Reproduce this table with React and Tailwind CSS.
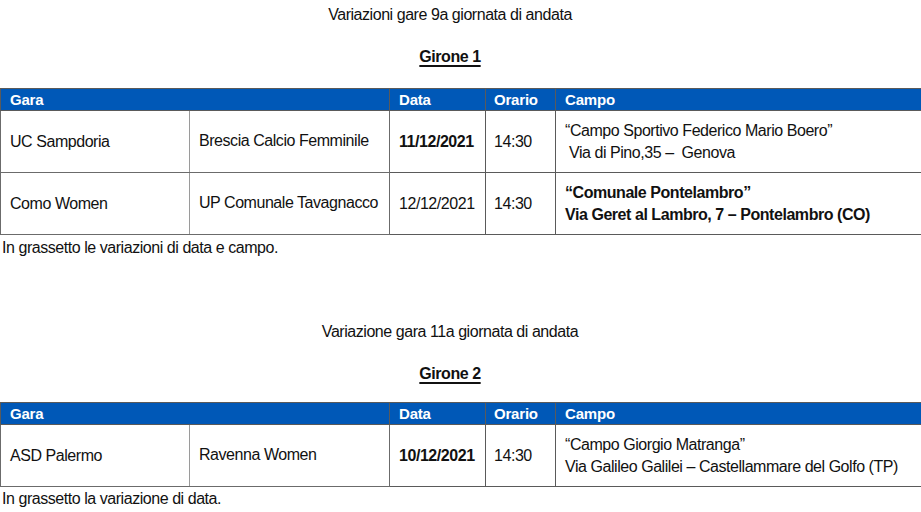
import React from 'react';

const cols = ['w-[189px]', 'w-[200px]', 'w-[96px]', 'w-[70px]', ''];

const HeaderRow = () => (
  <tr className="h-[22px] bg-[#0058b7] text-white font-bold text-[15px] tracking-[-0.2px]">
    <td colSpan={2} className="border border-[#5a5a5a] pl-[9px] leading-[20px]">Gara</td>
    <td className="border border-[#5a5a5a] pl-[9px] leading-[20px]">Data</td>
    <td className="border border-[#5a5a5a] pl-[8px] leading-[20px]">Orario</td>
    <td className="border-y border-l border-[#5a5a5a] pl-[9px] leading-[20px]">Campo</td>
  </tr>
);

const MatchRow = ({ home, away, date, dateBold, time, campo, campoBold }) => (
  <tr className="h-[62px] text-[16px]">
    <td className="border border-[#6b6b6b] border-r-[#9a9a9a] pl-[9px]">{home}</td>
    <td className="border border-[#6b6b6b] border-l-[#9a9a9a] pl-[9px] pb-[2px]">{away}</td>
    <td className={`border border-[#5a5a5a] pl-[9px] ${dateBold ? 'font-bold' : ''}`}>{date}</td>
    <td className="border border-[#5a5a5a] pl-[8px]">{time}</td>
    <td className={`border-y border-l border-[#5a5a5a] pl-[9px] leading-[22px] whitespace-pre ${campoBold ? 'font-bold' : ''}`}>
      {campo.map((line, i) => (
        <div key={i}>{line}</div>
      ))}
    </td>
  </tr>
);

const MatchTable = ({ rows }) => (
  <table className="w-[922px] border-collapse table-fixed">
    <colgroup>
      {cols.map((c, i) => (
        <col key={i} className={c} />
      ))}
    </colgroup>
    <tbody>
      <HeaderRow />
      {rows.map((r, i) => (
        <MatchRow key={i} {...r} />
      ))}
    </tbody>
  </table>
);

const girone1 = [
  {
    home: 'UC Sampdoria',
    away: 'Brescia Calcio Femminile',
    date: '11/12/2021',
    dateBold: true,
    time: '14:30',
    campo: ['“Campo Sportivo Federico Mario Boero”', ' Via di Pino,35 –  Genova'],
  },
  {
    home: 'Como Women',
    away: 'UP Comunale Tavagnacco',
    date: '12/12/2021',
    time: '14:30',
    campo: ['“Comunale Pontelambro”', 'Via Geret al Lambro, 7 – Pontelambro (CO)'],
    campoBold: true,
  },
];

const girone2 = [
  {
    home: 'ASD Palermo',
    away: 'Ravenna Women',
    date: '10/12/2021',
    dateBold: true,
    time: '14:30',
    campo: ['“Campo Giorgio Matranga”', 'Via Galileo Galilei – Castellammare del Golfo (TP)'],
  },
];

export default function App() {
  return (
    <div className="w-[921px] h-[512px] overflow-hidden bg-white text-[#111] tracking-[-0.45px] font-['Liberation_Sans_Narrow','Liberation_Sans',Arial,sans-serif]">
      {/* Girone 1 */}
      <div className="w-[900px] h-[30px] flex items-center justify-center text-[16px]">Variazioni gare 9a giornata di andata</div>
      <div className="w-[900px] mt-[17px] h-[20px] flex items-center justify-center text-[16px] font-bold underline decoration-2 underline-offset-[3px]">Girone 1</div>
      <div className="mt-[21px]">
        <MatchTable rows={girone1} />
      </div>
      <div className="h-[22px] pt-[4px] flex items-center pl-[2px] text-[16px]">In grassetto le variazioni di data e campo.</div>

      {/* Girone 2 */}
      <div className="w-[900px] mt-[60px] h-[30px] flex items-center justify-center text-[16px]">Variazione gara 11a giornata di andata</div>
      <div className="w-[900px] mt-[17px] h-[20px] flex items-center justify-center text-[16px] font-bold underline decoration-2 underline-offset-[3px]">Girone 2</div>
      <div className="mt-[18px]">
        <MatchTable rows={girone2} />
      </div>
      <div className="h-[20px] pt-[4px] flex items-center pl-[2px] text-[16px]">In grassetto la variazione di data.</div>
    </div>
  );
}
